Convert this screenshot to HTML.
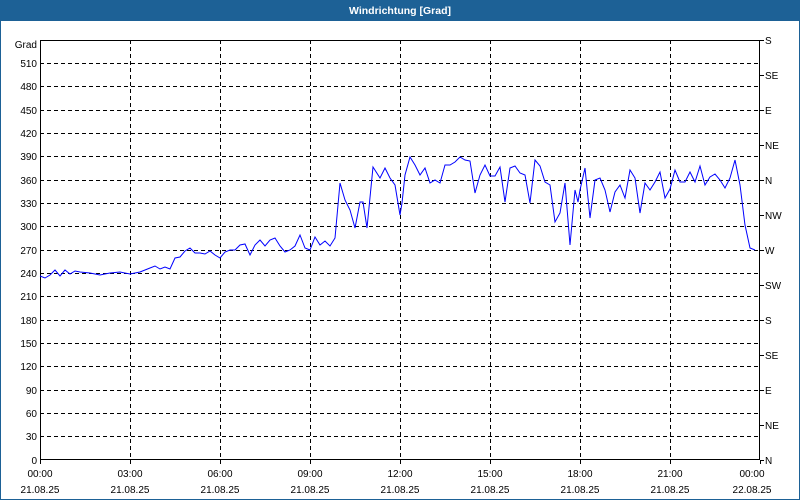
<!DOCTYPE html>
<html><head><style>
html,body{margin:0;padding:0;width:800px;height:500px;overflow:hidden;background:#fff}
</style></head><body>
<svg width="800" height="500" xmlns="http://www.w3.org/2000/svg" font-family="Liberation Sans, sans-serif" font-size="10">
<rect x="0" y="0" width="800" height="500" fill="#fff"/>
<rect x="0" y="0" width="800" height="21" fill="#1d6196"/>
<text x="400" y="14" fill="#fff" font-weight="bold" font-size="10.5" text-anchor="middle">Windrichtung [Grad]</text>
<rect x="0.5" y="20.5" width="799" height="479" fill="none" stroke="#1d6196"/>
<g stroke="#000" stroke-dasharray="4,3" stroke-width="1">
<line x1="130.5" y1="40" x2="130.5" y2="460"/><line x1="220.5" y1="40" x2="220.5" y2="460"/>
<line x1="310.5" y1="40" x2="310.5" y2="460"/><line x1="400.5" y1="40" x2="400.5" y2="460"/>
<line x1="490.5" y1="40" x2="490.5" y2="460"/><line x1="580.5" y1="40" x2="580.5" y2="460"/>
<line x1="670.5" y1="40" x2="670.5" y2="460"/>
<line x1="40" y1="63.5" x2="760" y2="63.5"/><line x1="40" y1="86.5" x2="760" y2="86.5"/>
<line x1="40" y1="110.5" x2="760" y2="110.5"/><line x1="40" y1="133.5" x2="760" y2="133.5"/>
<line x1="40" y1="156.5" x2="760" y2="156.5"/><line x1="40" y1="180.5" x2="760" y2="180.5"/>
<line x1="40" y1="203.5" x2="760" y2="203.5"/><line x1="40" y1="226.5" x2="760" y2="226.5"/>
<line x1="40" y1="250.5" x2="760" y2="250.5"/><line x1="40" y1="273.5" x2="760" y2="273.5"/>
<line x1="40" y1="296.5" x2="760" y2="296.5"/><line x1="40" y1="320.5" x2="760" y2="320.5"/>
<line x1="40" y1="343.5" x2="760" y2="343.5"/><line x1="40" y1="366.5" x2="760" y2="366.5"/>
<line x1="40" y1="390.5" x2="760" y2="390.5"/><line x1="40" y1="413.5" x2="760" y2="413.5"/>
<line x1="40" y1="436.5" x2="760" y2="436.5"/>
</g>
<rect x="40.5" y="40.5" width="719" height="419" fill="none" stroke="#000"/>
<g stroke="#000">
<line x1="760" y1="40.5" x2="764" y2="40.5"/><line x1="760" y1="75.5" x2="764" y2="75.5"/>
<line x1="760" y1="110.5" x2="764" y2="110.5"/><line x1="760" y1="145.5" x2="764" y2="145.5"/>
<line x1="760" y1="180.5" x2="764" y2="180.5"/><line x1="760" y1="215.5" x2="764" y2="215.5"/>
<line x1="760" y1="250.5" x2="764" y2="250.5"/><line x1="760" y1="285.5" x2="764" y2="285.5"/>
<line x1="760" y1="320.5" x2="764" y2="320.5"/><line x1="760" y1="355.5" x2="764" y2="355.5"/>
<line x1="760" y1="390.5" x2="764" y2="390.5"/><line x1="760" y1="425.5" x2="764" y2="425.5"/>
<line x1="760" y1="460.5" x2="764" y2="460.5"/>
<line x1="40.5" y1="460" x2="40.5" y2="464"/><line x1="130.5" y1="460" x2="130.5" y2="464"/>
<line x1="220.5" y1="460" x2="220.5" y2="464"/><line x1="310.5" y1="460" x2="310.5" y2="464"/>
<line x1="400.5" y1="460" x2="400.5" y2="464"/><line x1="490.5" y1="460" x2="490.5" y2="464"/>
<line x1="580.5" y1="460" x2="580.5" y2="464"/><line x1="670.5" y1="460" x2="670.5" y2="464"/>
<line x1="760.5" y1="460" x2="760.5" y2="464"/>
</g>
<g text-anchor="end">
<text x="37" y="48">Grad</text>
<text x="37" y="67">510</text><text x="37" y="90">480</text><text x="37" y="114">450</text>
<text x="37" y="137">420</text><text x="37" y="160">390</text><text x="37" y="184">360</text>
<text x="37" y="207">330</text><text x="37" y="230">300</text><text x="37" y="254">270</text>
<text x="37" y="277">240</text><text x="37" y="300">210</text><text x="37" y="324">180</text>
<text x="37" y="347">150</text><text x="37" y="370">120</text><text x="37" y="394">90</text>
<text x="37" y="417">60</text><text x="37" y="440">30</text><text x="37" y="464">0</text>
</g>
<g>
<text x="765" y="44">S</text><text x="765" y="79">SE</text><text x="765" y="114">E</text>
<text x="765" y="149">NE</text><text x="765" y="184">N</text><text x="765" y="219">NW</text>
<text x="765" y="254">W</text><text x="765" y="289">SW</text><text x="765" y="324">S</text>
<text x="765" y="359">SE</text><text x="765" y="394">E</text><text x="765" y="429">NE</text>
<text x="765" y="464">N</text>
</g>
<g text-anchor="middle">
<text x="40" y="477">00:00</text><text x="40" y="493">21.08.25</text>
<text x="130" y="477">03:00</text><text x="130" y="493">21.08.25</text>
<text x="220" y="477">06:00</text><text x="220" y="493">21.08.25</text>
<text x="310" y="477">09:00</text><text x="310" y="493">21.08.25</text>
<text x="400" y="477">12:00</text><text x="400" y="493">21.08.25</text>
<text x="490" y="477">15:00</text><text x="490" y="493">21.08.25</text>
<text x="580" y="477">18:00</text><text x="580" y="493">21.08.25</text>
<text x="670" y="477">21:00</text><text x="670" y="493">21.08.25</text>
<text x="752" y="477">00:00</text><text x="752" y="493">22.08.25</text>
</g>
<polyline fill="none" stroke="#0000ff" stroke-width="1" points="40,276 45,278 50,275 55,270 60,276 65,270 70,274 75,271 80,272 90,273 100,275 110,273 120,272 130,274 140,272 150,268 155,266 160,269 165,267 170,269 175,258 180,257 185,251 190,248 195,253 200,253 205,254 210,251 215,255 220,258 225,252 230,250 235,250 240,245 245,244 250,255 255,245 260,240 265,246 270,240 275,238 280,246 285,252 290,250 295,246 300,235 305,248 310,250 315,237 320,245 325,241 330,246 335,238 340,183 345,200 350,210 355,228 360,202 363,202 367,228 373,167 380,178 385,168 390,178 395,185 400,215 402,203 405,175 410,157 415,165 420,175 425,168 430,183 435,180 440,183 445,165 450,165 455,162 460,157 465,160 470,161 475,193 480,175 485,165 490,176 495,176 500,167 505,202 510,168 515,166 520,173 525,175 530,203 535,160 540,166 545,182 550,185 555,222 560,213 565,183 570,245 575,190 578,202 580,190 585,168 590,218 595,180 600,178 605,190 610,212 615,192 620,185 625,198 630,170 635,178 640,213 645,183 650,190 655,182 660,172 665,198 670,189 675,170 680,182 685,182 690,172 695,182 700,166 705,185 710,177 715,174 720,180 725,188 730,178 735,160 740,185 745,225 750,248 755,250"/>
</svg>
</body></html>
